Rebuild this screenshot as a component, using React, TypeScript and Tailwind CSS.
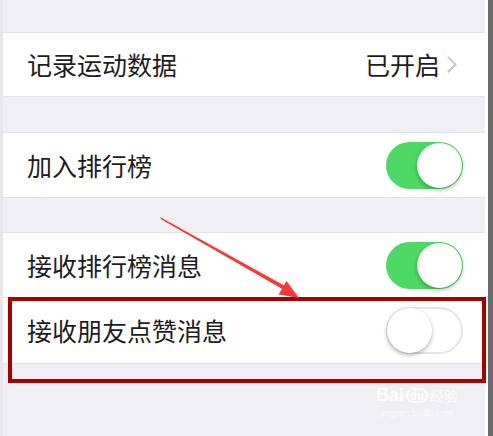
function Toggle({ on }: { on: boolean }) {
  return (
    <div
      className={
        on
          ? "relative w-[77px] h-[47px] rounded-full bg-[#4cd964]"
          : "relative w-[77px] h-[47px] rounded-full bg-white border-2 border-[#e5e5ea]"
      }
    >
      <div
        className={
          on
            ? "absolute right-[1px] top-[1px] w-[45px] h-[45px] rounded-full bg-white shadow-[0_2px_4px_rgba(0,0,0,0.3)]"
            : "absolute -left-[1px] -top-[1px] w-[45px] h-[45px] rounded-full bg-white shadow-[0_2px_4px_rgba(0,0,0,0.3)]"
        }
      />
    </div>
  );
}

function Row({
  label,
  children,
  className = "",
}: {
  label: string;
  children?: React.ReactNode;
  className?: string;
}) {
  return (
    <div
      className={
        "flex items-center justify-between bg-white pl-6 pr-[22px] border-y border-[#e3e3e8] " +
        className
      }
    >
      <span className="text-[25px] leading-none text-[#1c1c1c]">{label}</span>
      {children}
    </div>
  );
}

export default function App() {
  return (
    <div
      className="relative flex w-[493px] h-[436px] overflow-hidden bg-white"
      style={{ fontFamily: '"Noto Sans CJK SC", "Noto Sans", sans-serif' }}
    >
      <div className="w-[3px] bg-[#e8e8ec]" />

      <div className="flex-1 flex flex-col bg-[#efeff4] pt-[32px]">
        <Row label="记录运动数据" className="h-[65px]">
          <div className="flex items-center gap-[7px] mr-[6px]">
            <span className="text-[25px] leading-none text-[#1c1c1c]">已开启</span>
            <svg width="10" height="17" viewBox="0 0 10 17" fill="none">
              <polyline
                points="1.5,1.5 8.5,8.5 1.5,15.5"
                stroke="#c7c7cc"
                strokeWidth="2"
                strokeLinecap="round"
                strokeLinejoin="round"
              />
            </svg>
          </div>
        </Row>

        <div className="h-[35px]" />

        <Row label="加入排行榜" className="h-[66px]">
          <Toggle on />
        </Row>

        <div className="h-[34px]" />

        <Row label="接收排行榜消息" className="h-[65px] border-b-0">
          <Toggle on />
        </Row>
        <Row label="接收朋友点赞消息" className="h-[67px]">
          <Toggle on={false} />
        </Row>
      </div>

      <div className="w-[3px] bg-white" />
      <div className="w-[5px] bg-[#6b6b6b]" />

      {/* annotation: red box */}
      <div className="absolute left-[8px] top-[297px] w-[478px] h-[86px] border-[4px] border-[#a80000]" />

      {/* annotation: arrow */}
      <svg
        className="absolute left-0 top-0"
        width="493"
        height="436"
        viewBox="0 0 493 436"
      >
        <polygon
          points="160,217 161.5,219.5 284,290 286,286.5"
          fill="#f23a3a"
        />
        <polygon points="299,298 278.5,294.5 286.5,281" fill="#f23a3a" />
      </svg>

      {/* watermark */}
      <div className="absolute left-[376px] top-[386px] flex flex-col items-center text-white/80 leading-none">
        <div className="flex items-center gap-[2px]">
          <span className="text-[18px] font-bold" style={{ fontFamily: '"Liberation Sans", sans-serif' }}>
            Bai
          </span>
          <span className="text-[11px] font-bold rounded-full border-2 border-white/80 px-[2px]">du</span>
          <span className="text-[14px]">经验</span>
        </div>
        <span className="text-[9px] mt-[5px]" style={{ fontFamily: '"Liberation Sans", sans-serif' }}>
          jingyan.baidu.com
        </span>
      </div>
    </div>
  );
}
